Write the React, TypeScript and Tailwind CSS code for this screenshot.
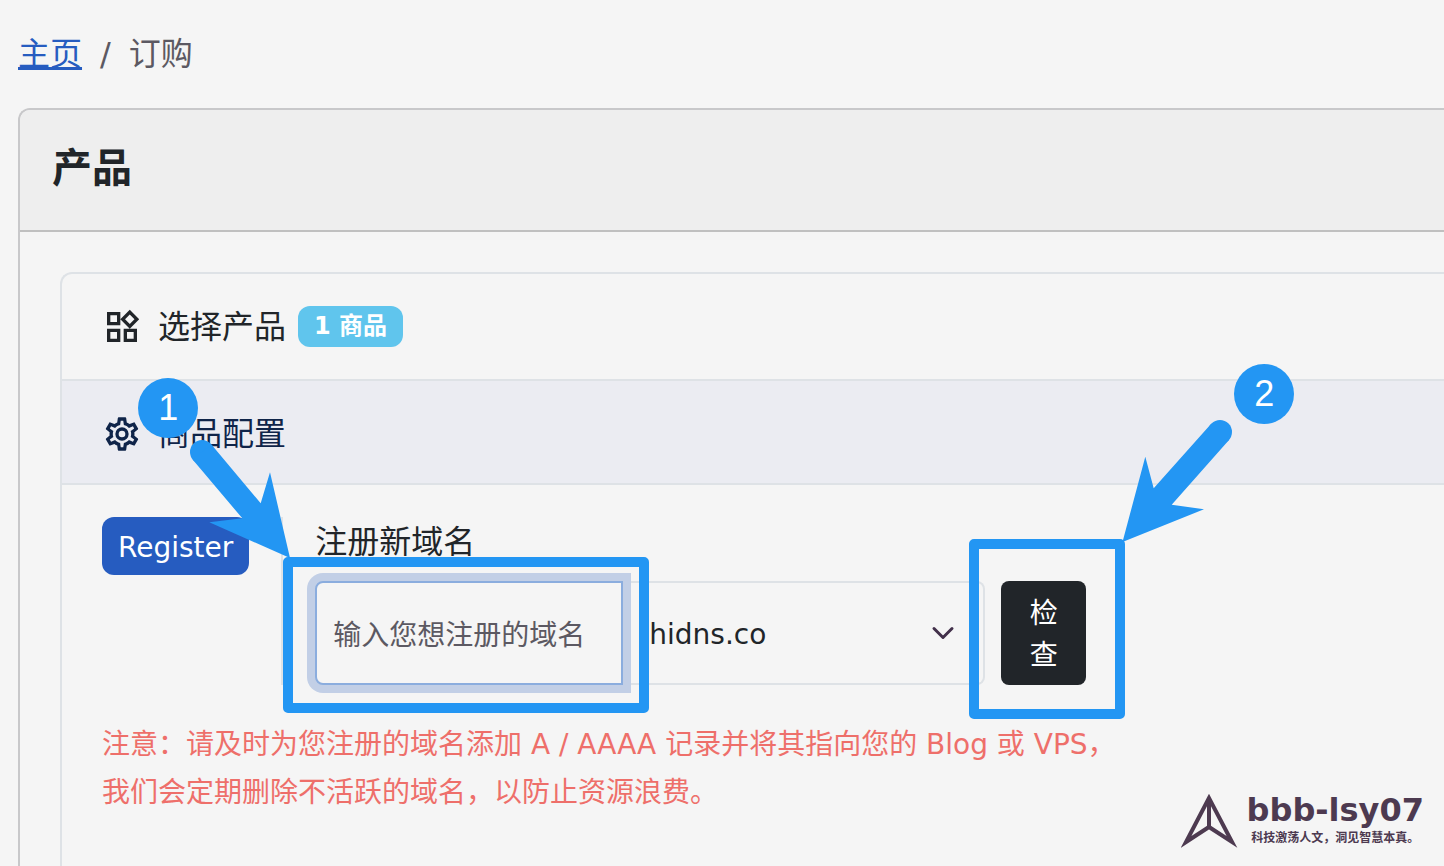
import React from 'react';
import { MdOutlineWidgets } from 'react-icons/md';

interface StepBadgeProps {
  step: number;
  className: string;
}

const StepBadge: React.FC<StepBadgeProps> = ({ step, className }) => {
  return (
    <span
      className={`absolute flex h-[60px] w-[60px] items-center justify-center rounded-full bg-[#2396f3] font-['Liberation_Sans',sans-serif] text-4xl text-white ${className}`}
    >
      {step}
    </span>
  );
};

const CogIcon: React.FC = () => {
  return (
    <svg width="40" height="40" viewBox="0 0 24 24" fill="currentColor" aria-hidden="true">
      <path d="M12,8A4,4 0 0,1 16,12A4,4 0 0,1 12,16A4,4 0 0,1 8,12A4,4 0 0,1 12,8M12,10A2,2 0 0,0 10,12A2,2 0 0,0 12,14A2,2 0 0,0 14,12A2,2 0 0,0 12,10M10,22C9.75,22 9.54,21.82 9.5,21.58L9.13,18.93C8.5,18.68 7.96,18.34 7.44,17.94L4.95,18.95C4.73,19.03 4.46,18.95 4.34,18.73L2.34,15.27C2.21,15.05 2.27,14.78 2.46,14.63L4.57,12.97L4.5,12L4.57,11L2.46,9.37C2.27,9.22 2.21,8.95 2.34,8.73L4.34,5.27C4.46,5.05 4.73,4.96 4.95,5.05L7.44,6.05C7.96,5.66 8.5,5.32 9.13,5.07L9.5,2.42C9.54,2.18 9.75,2 10,2H14C14.25,2 14.46,2.18 14.5,2.42L14.87,5.07C15.5,5.32 16.04,5.66 16.56,6.05L19.05,5.05C19.27,4.96 19.54,5.05 19.66,5.27L21.66,8.73C21.79,8.95 21.73,9.22 21.54,9.37L19.43,11L19.5,12L19.43,13L21.54,14.63C21.73,14.78 21.79,15.05 21.66,15.27L19.66,18.73C19.54,18.95 19.27,19.04 19.05,18.95L16.56,17.95C16.04,18.34 15.5,18.68 14.87,18.93L14.5,21.58C14.46,21.82 14.25,22 14,22H10M11.25,4L10.88,6.61C9.68,6.86 8.62,7.5 7.85,8.39L5.44,7.35L4.69,8.65L6.8,10.2C6.4,11.37 6.4,12.64 6.8,13.8L4.68,15.36L5.43,16.66L7.86,15.62C8.63,16.5 9.68,17.14 10.87,17.38L11.24,20H12.76L13.13,17.39C14.32,17.14 15.37,16.5 16.14,15.62L18.57,16.66L19.32,15.36L17.2,13.81C17.6,12.64 17.6,11.37 17.2,10.2L19.31,8.65L18.56,7.35L16.15,8.39C15.38,7.5 14.32,6.86 13.12,6.62L12.75,4H11.25Z" />
    </svg>
  );
};

const Breadcrumb: React.FC = () => {
  return (
    <nav className="flex h-[108px] items-center gap-[18px] text-[32px] leading-12 text-[#5c5962]">
      <a href="#" className="text-[#265cc0] underline decoration-[3px] underline-offset-2">主页</a>
      <span>/</span>
      <span>订购</span>
    </nav>
  );
};

const DomainField: React.FC = () => {
  return (
    <div className="relative z-10 w-[308px]">
      <input
        id="domain"
        type="text"
        placeholder="输入您想注册的域名"
        className="h-[104px] w-full rounded-l-lg border-2 border-[#8badde] bg-[#f5f5f5] px-4 pt-1 text-[28px] text-[#212529] shadow-[0_0_0_8px_#c2cfe6] outline-none placeholder:text-[#5c5962]"
      />
      <div className="pointer-events-none absolute -top-6 -right-[26px] -bottom-7 -left-8 rounded-[5px] border-[10px] border-[#2396f3]" />
      <svg
        className="pointer-events-none absolute -top-[134px] -left-[130px]"
        width="110"
        height="120"
        viewBox="185 447 110 120"
        fill="#2396f3"
        overflow="visible"
        aria-hidden="true"
      >
        <circle cx="202" cy="452" r="12" />
        <path d="M211.4 444.6 260.7 503.3 270 472.3 290 558 209.3 522.3 242.3 518.3 192.6 459.6Z" />
      </svg>
      <StepBadge step={1} className="-top-[203px] -left-[177px]" />
    </div>
  );
};

const SuffixSelect: React.FC = () => {
  return (
    <div className="relative w-[362px]">
      <select
        aria-label="域名后缀"
        className="h-[104px] w-full appearance-none rounded-r-lg border-2 border-l-0 border-[#dee2e6] bg-[#f5f5f5] pt-1 pr-16 pl-[26px] text-[28px] text-[#212529] outline-none"
      >
        <option>hidns.co</option>
      </select>
      <svg
        className="pointer-events-none absolute top-9 right-7"
        width="28"
        height="32"
        viewBox="0 0 28 32"
        fill="none"
        stroke="#42304a"
        strokeWidth="3"
        strokeLinecap="round"
        strokeLinejoin="round"
        aria-hidden="true"
      >
        <path d="M5 11.5l9 9 9-9" />
      </svg>
    </div>
  );
};

const CheckButton: React.FC = () => {
  return (
    <div className="relative z-10 ml-4">
      <button type="button" className="h-[104px] w-[85px] rounded-lg bg-[#212529] px-7 pt-1 text-[28px] leading-[42px] text-white">
        检查
      </button>
      <div className="pointer-events-none absolute -top-[42px] -right-[39px] -bottom-[34px] -left-8 rounded-[5px] border-[10px] border-[#2396f3]" />
      <svg
        className="pointer-events-none absolute -top-[161px] left-[119px]"
        width="115"
        height="130"
        viewBox="1120 420 115 130"
        fill="#2396f3"
        aria-hidden="true"
      >
        <circle cx="1220" cy="432" r="12" />
        <path d="M1211.2 423.8 1153.7 488.3 1145.3 456.7 1122.5 542 1204 509.3 1171.7 504.7 1229 440Z" />
      </svg>
      <StepBadge step={2} className="-top-[217px] left-[233px]" />
    </div>
  );
};

const Watermark: React.FC = () => {
  return (
    <div className="absolute right-5 bottom-4 flex items-end gap-2 text-[#4d3a50]">
      <svg width="58" height="60" viewBox="0 0 58 60" fill="none" stroke="currentColor" strokeWidth="4" aria-hidden="true">
        <path d="M28 8 5 52 28 37 51 52Z" strokeMiterlimit="10" />
        <path d="M28 8v29" />
      </svg>
      <div className="flex flex-col items-center font-bold">
        <span className="text-[32px] leading-8">bbb-lsy07</span>
        <span className="text-xs leading-6">科技激荡人文，洞见智慧本真。</span>
      </div>
    </div>
  );
};

const App: React.FC = () => {
  return (
    <div className="relative flex min-h-screen flex-col overflow-hidden bg-[#f5f5f5] pl-[18px] font-['DejaVu_Sans','Noto_Sans_CJK_SC',sans-serif] text-[#212529]">
      <Breadcrumb />

      <main className="flex flex-1 flex-col rounded-tl-xl border-t-2 border-l-2 border-[#c8c8ca]">
        <header className="flex h-[122px] items-center rounded-tl-[10px] border-b-2 border-[#c0c0c0] bg-[#eeeeee] px-8 pb-1">
          <h1 className="text-[40px] leading-12 font-semibold">产品</h1>
        </header>

        <section className="mt-10 ml-10 flex-1 rounded-tl-xl border-t-2 border-l-2 border-[#dee2e6]">
          <h2 className="flex h-[107px] items-center border-b-2 border-[#dee2e6] px-10 text-[32px]">
            <MdOutlineWidgets size={40} />
            <span className="ml-4">选择产品</span>
            <span className="ml-3 rounded-xl bg-[#60c5ed] px-4 text-2xl leading-[41px] font-bold text-white">1 商品</span>
          </h2>
          <h2 className="flex h-[104px] items-center border-b-2 border-[#dee2e6] bg-[#ebecf2] px-10 pt-1 text-[32px] text-[#0f2449]">
            <CogIcon />
            <span className="ml-4">商品配置</span>
          </h2>

          <div className="px-10 pt-8">
            <div className="flex items-start">
              <button type="button" className="rounded-xl bg-[#265cc0] px-4 pt-2.5 pb-1.5 text-[28px] leading-[42px] text-white">
                Register
              </button>
              <div className="ml-8 border-l-2 border-[#dee2e6] pl-8">
                <label htmlFor="domain" className="block h-16 text-[32px] leading-[50px]">注册新域名</label>
                <div className="flex">
                  <DomainField />
                  <SuffixSelect />
                  <CheckButton />
                </div>
              </div>
            </div>

            <p className="mt-9 text-[28px] leading-12 text-[#ee6f6a]">
              注意：请及时为您注册的域名添加 A / AAAA 记录并将其指向您的 Blog 或 VPS，
              <br />
              我们会定期删除不活跃的域名，以防止资源浪费。
            </p>
          </div>
        </section>
      </main>

      <Watermark />
    </div>
  );
};

export default App;
